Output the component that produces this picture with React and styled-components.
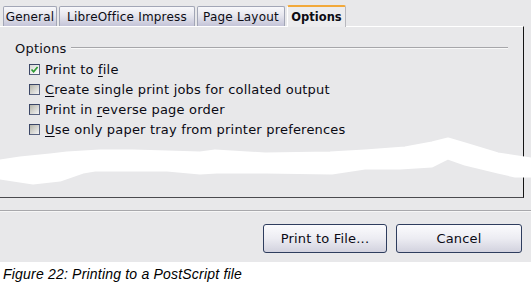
import React from "react";
import styled, { createGlobalStyle } from "styled-components";

const Global = createGlobalStyle`
  html, body { margin: 0; padding: 0; background: #ffffff; }
  body { font-family: "DejaVu Sans", "Liberation Sans", sans-serif; }
`;

const Page = styled.div`
  position: relative;
  width: 531px;
  height: 292px;
  overflow: hidden;
  background: #ffffff;
`;

const Dialog = styled.div`
  width: 531px;
  height: 262px;
  background: #e8e8ea;
  display: flex;
  flex-direction: column;
`;

const TabBar = styled.div`
  height: 26px;
  display: flex;
  align-items: flex-end;
  gap: 2px;
  padding-left: 3px;
  box-sizing: border-box;
`;

const Tab = styled.div`
  box-sizing: border-box;
  width: ${(p) => p.$w}px;
  height: ${(p) => (p.$active ? 22 : 20)}px;
  margin-bottom: ${(p) => (p.$active ? -1 : 0)}px;
  display: flex;
  align-items: center;
  justify-content: center;
  font-size: ${(p) => (p.$active ? "11.5px" : "12px")};
  font-weight: ${(p) => (p.$active ? 700 : 400)};
  letter-spacing: ${(p) => (p.$active ? "0" : "0.2px")};
  color: #0c0c14;
  border: 1px solid ${(p) => (p.$active ? "#b8b8be" : "#a2a6b6")};
  border-left-color: ${(p) => (p.$active ? "#ffffff" : "#a2a6b6")};
  border-top: ${(p) => (p.$active ? "2px solid #f2a93a" : "1px solid #a2a6b6")};
  border-bottom: none;
  border-radius: 2px 2px 0 0;
  background: ${(p) =>
    p.$active
      ? "#ececee"
      : "linear-gradient(to bottom, #f8f8fb 0%, #e6e6ee 45%, #c4c4d8 100%)"};
  padding-top: ${(p) => (p.$active ? 0 : 1)}px;
  position: relative;
  z-index: ${(p) => (p.$active ? 2 : 0)};
`;

const Panel = styled.div`
  box-sizing: border-box;
  height: 172px;
  width: 524px;
  border-top: 1px solid #ffffff;
  border-right: 1px solid #141414;
  border-bottom: 1px solid #4a4a4e;
  padding: 13px 15px 0 15px;
  display: flex;
  flex-direction: column;
`;

const FrameHeader = styled.div`
  display: flex;
  align-items: center;
  gap: 4px;
  height: 16px;
`;

const FrameLabel = styled.span`
  font-size: 13px;
  letter-spacing: 0.2px;
  color: #101018;
`;

const FrameLine = styled.div`
  flex: 1;
  height: 1px;
  background: #a6a6aa;
  border-bottom: 1px solid #f8f8f8;
`;

const OptionList = styled.div`
  display: flex;
  flex-direction: column;
  padding: 3px 0 0 14px;
`;

const OptionRow = styled.label`
  height: 20px;
  display: flex;
  align-items: center;
  gap: 5px;
  font-size: 13px;
  letter-spacing: 0.2px;
  color: #0a0a14;
`;

const Box = styled.span`
  box-sizing: border-box;
  width: 11px;
  height: 11px;
  border: 1px solid #3a4666;
  border-right-color: #5a6480;
  border-bottom-color: #5a6480;
  background: ${(p) =>
    p.$checked
      ? "linear-gradient(135deg, #d6d6d2 0%, #f0f0f0 60%, #ffffff 100%)"
      : "linear-gradient(135deg, #b4b4a8 0%, #d8d8d4 55%, #f4f4f4 100%)"};
  display: flex;
  align-items: center;
  justify-content: center;
`;

const Mn = styled.span`
  text-decoration: underline;
  text-underline-offset: 2px;
`;

const Footer = styled.div`
  flex: 1;
  display: flex;
  flex-direction: column;
  padding-top: 12px;
`;

const Separator = styled.div`
  height: 1px;
  background: #a8a8ac;
  border-bottom: 1px solid #f6f6f6;
`;

const ButtonRow = styled.div`
  display: flex;
  justify-content: flex-end;
  gap: 9px;
  padding: 12px 9px 0 0;
`;

const Button = styled.button`
  box-sizing: border-box;
  width: ${(p) => p.$w}px;
  height: 29px;
  font-family: "DejaVu Sans", sans-serif;
  font-size: 13px;
  letter-spacing: 0.2px;
  color: #0a0a14;
  border: 1px solid #2e3d5e;
  border-radius: 3px;
  background: linear-gradient(to bottom, #fbfbfd 0%, #ececf2 50%, #d2d2de 100%);
  padding: 0;
`;

const Caption = styled.div`
  padding: 4px 0 0 3px;
  font-family: "Liberation Sans", Arial, sans-serif;
  font-style: italic;
  font-size: 14px;
  line-height: 16px;
  letter-spacing: 0.2px;
  color: #000000;
`;

const Stroke = styled.svg`
  position: absolute;
  left: 0;
  top: 0;
  pointer-events: none;
`;

const tabs = [
  { label: "General", w: 54 },
  { label: "LibreOffice Impress", w: 136 },
  { label: "Page Layout", w: 88 },
  { label: "Options", w: 59, active: true },
];

const Check = () => (
  <svg width="9" height="9" viewBox="0 0 9 9">
    <path d="M1.5 4.5 L3.6 6.8 L7.6 2" fill="none" stroke="#2c9a32" strokeWidth="1.7" />
  </svg>
);

const top = [
  [0, 161], [20, 158], [50, 155], [67, 153], [100, 151], [133, 151], [167, 152],
  [200, 153], [215, 151], [265, 154], [330, 153], [365, 151], [405, 148], [432, 143],
  [448, 139], [465, 144], [498, 154], [531, 159],
];
const bottom = [
  [531, 176], [515, 176], [498, 172], [465, 164], [448, 158], [432, 166], [400, 168],
  [365, 168], [332, 173], [265, 172], [217, 172], [200, 173], [167, 170], [133, 170],
  [95, 170], [83, 172], [60, 180], [33, 183], [0, 178],
];
const strokePath =
  "M" + [...top, ...bottom].map(([x, y]) => `${x} ${y}`).join(" L") + " Z";

export default function App() {
  return (
    <>
      <Global />
      <Page>
        <Dialog>
          <TabBar>
            {tabs.map((t) => (
              <Tab key={t.label} $w={t.w} $active={t.active}>
                {t.label}
              </Tab>
            ))}
          </TabBar>
          <Panel>
            <FrameHeader>
              <FrameLabel>Options</FrameLabel>
              <FrameLine />
            </FrameHeader>
            <OptionList>
              <OptionRow>
                <Box $checked>
                  <Check />
                </Box>
                <span>
                  Print to <Mn>f</Mn>ile
                </span>
              </OptionRow>
              <OptionRow>
                <Box />
                <span>
                  <Mn>C</Mn>reate single print jobs for collated output
                </span>
              </OptionRow>
              <OptionRow>
                <Box />
                <span>
                  Print in <Mn>r</Mn>everse page order
                </span>
              </OptionRow>
              <OptionRow>
                <Box />
                <span>
                  <Mn>U</Mn>se only paper tray from printer preferences
                </span>
              </OptionRow>
            </OptionList>
          </Panel>
          <Footer>
            <Separator />
            <ButtonRow>
              <Button $w={124}>Print to File...</Button>
              <Button $w={126}>Cancel</Button>
            </ButtonRow>
          </Footer>
        </Dialog>
        <Caption>Figure 22: Printing to a PostScript file</Caption>
        <Stroke width="531" height="292" viewBox="0 0 531 292">
          <path d={strokePath} fill="#ffffff" stroke="#ffffff" strokeWidth="3" strokeLinejoin="round" />
        </Stroke>
      </Page>
    </>
  );
}
